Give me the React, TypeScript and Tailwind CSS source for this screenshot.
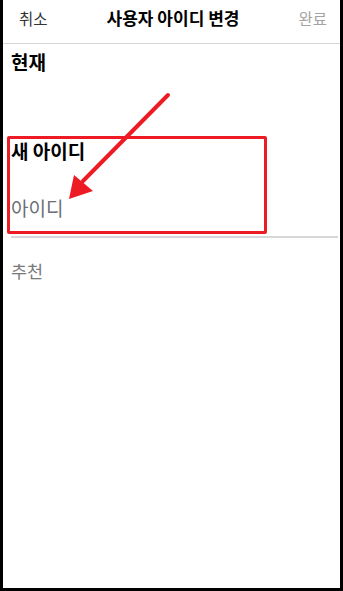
export default function App() {
  const font = { fontFamily: '"Noto Sans CJK KR", "Noto Sans", sans-serif' };

  return (
    <div className="w-[343px] h-[591px] bg-black" style={font}>
      <div className="relative ml-[3px] w-[337px] h-[588px] bg-white">
        {/* header */}
        <div className="flex h-[44px] items-center justify-between border-b border-[#d6d6d6] pb-[8px] pl-[16px] pr-[13px]">
          <span className="text-[15.5px] leading-[20px] text-[#333]">취소</span>
          <span className="text-[17px] font-bold leading-[20px] text-black">사용자 아이디 변경</span>
          <span className="text-[15.5px] leading-[20px] text-[#a3a3a3]">완료</span>
        </div>

        <div className="flex flex-col pl-[8px] pr-[2px]">
          <h2 className="mt-[6px] text-[19px] font-bold leading-[24px] text-black">현재</h2>

          <h2 className="mt-[65px] text-[19px] font-bold leading-[24px] text-black">새 아이디</h2>
          <input
            className="mt-[33px] h-[24px] text-[19px] leading-[24px] text-black placeholder-[#6b6f75] outline-none"
            placeholder="아이디"
          />
          <hr className="mt-[16px] border-t-2 border-[#d5d7d9]" />

          <span className="mt-[21px] text-[17.5px] leading-[24px] text-[#7a7a7a]">추천</span>
        </div>

        {/* annotation */}
        <div className="absolute left-[4px] top-[136px] h-[98px] w-[260px] rounded-[2px] border-[3px] border-[#ed1c24]" />
        <svg className="absolute left-0 top-0" width="337" height="588" viewBox="0 0 337 588">
          <line x1="165" y1="95" x2="80" y2="181" stroke="#ed1c24" strokeWidth="4" strokeLinecap="round" />
          <polygon points="66,199 71,175 90,191" fill="#ed1c24" />
        </svg>
      </div>
    </div>
  );
}
